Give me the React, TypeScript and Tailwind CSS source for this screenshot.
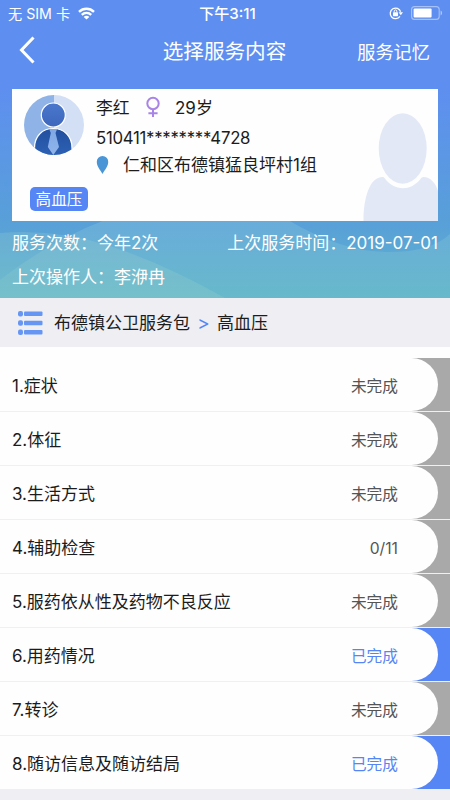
import type { ReactNode } from 'react';

interface ServiceItem {
  name: string;
  status: string;
  done?: boolean;
}

const items: ServiceItem[] = [
  { name: '1.症状', status: '未完成' },
  { name: '2.体征', status: '未完成' },
  { name: '3.生活方式', status: '未完成' },
  { name: '4.辅助检查', status: '0/11' },
  { name: '5.服药依从性及药物不良反应', status: '未完成' },
  { name: '6.用药情况', status: '已完成', done: true },
  { name: '7.转诊', status: '未完成' },
  { name: '8.随访信息及随访结局', status: '已完成', done: true },
];

function StatusBar() {
  return (
    <div className="grid h-[25px] grid-cols-3 items-center pl-2 pr-[7px] text-[14.2px] leading-[25px]">
      <div className="flex items-center gap-2">
        <span className="whitespace-nowrap">无 SIM 卡</span>
        <svg width="17" height="13" viewBox="0 0 17 13" fill="none" stroke="white" strokeWidth="2.4">
          <path d="M1 4.8a10.8 10.8 0 0 1 15 0" />
          <path d="M3.8 7.8a6.8 6.8 0 0 1 9.4 0" />
          <path d="M8.5 12.6 5.7 9.9a3.8 3.8 0 0 1 5.6 0z" fill="white" stroke="none" />
        </svg>
      </div>
      <div className="pl-1 pt-px text-center text-[15px] font-medium">下午3:11</div>
      <div className="flex items-center justify-end gap-[8px]">
        <svg width="14" height="14" viewBox="0 0 14 14" fill="none" stroke="white" strokeWidth="1.3">
          <path d="M10.9 10.4A5.3 5.3 0 1 1 11.6 5.8" />
          <path d="M9.6 6.2H14l-2.2 3z" fill="white" stroke="none" />
          <rect x="4" y="6.2" width="5" height="4" rx="0.6" fill="white" stroke="none" />
          <path d="M5.2 6.4V5.2a1.3 1.3 0 0 1 2.6 0v1.2" strokeWidth="1" />
        </svg>
        <svg width="32" height="14" viewBox="0 0 32 14" fill="none">
          <rect x="0.6" y="0.6" width="27.6" height="12.8" rx="3" stroke="white" strokeOpacity="0.45" strokeWidth="1.1" />
          <rect x="2.6" y="2.5" width="18" height="9" rx="1" fill="white" />
          <path d="M29.6 4.5v5c1.9-.8 1.9-4.2 0-5z" fill="white" fillOpacity="0.5" />
        </svg>
      </div>
    </div>
  );
}

function Avatar() {
  return (
    <svg className="mt-[6px]" width="60" height="60" viewBox="0 0 60 60">
      <defs>
        <clipPath id="avatarClip">
          <circle cx="30" cy="30" r="30" />
        </clipPath>
        <linearGradient id="head" x1="0" y1="0" x2="0" y2="1">
          <stop offset="0" stopColor="#4a78cc" />
          <stop offset="1" stopColor="#3d66bc" />
        </linearGradient>
        <linearGradient id="suit" x1="0" y1="0" x2="0" y2="1">
          <stop offset="0" stopColor="#234f9e" />
          <stop offset="1" stopColor="#2d62b6" />
        </linearGradient>
        <linearGradient id="tie" x1="0" y1="0" x2="0" y2="1">
          <stop offset="0" stopColor="#7fa8e4" />
          <stop offset="1" stopColor="#8fb5ea" />
        </linearGradient>
      </defs>
      <g clipPath="url(#avatarClip)">
        <path d="M0 0h30v60H0z" fill="#8fb3e6" />
        <path d="M30 0h30v60H30z" fill="#d2dff4" />
        <path d="M10.5 62V53c0-12 8-19.5 18.7-19.5S48 41 48 53v9z" fill="url(#suit)" stroke="white" strokeWidth="1.2" />
        <circle cx="29.3" cy="20" r="12" fill="url(#head)" stroke="white" strokeWidth="1.2" />
        <path d="M25.2 34h8l-1.7 4 3.5 14-5.7 8-5.5-8 3-14z" fill="url(#tie)" />
      </g>
    </svg>
  );
}

function PatientCard() {
  return (
    <div className="mx-3 flex h-[132px] bg-[#fefefe] text-[17px] leading-6 text-[#1c1c1c]">
      <div className="flex w-[84px] shrink-0 flex-col pl-3">
        <Avatar />
        <span className="ml-[6px] mt-[32px] flex h-[24px] w-[58px] items-center justify-center rounded-[5px] bg-[#5686f5] pt-px text-[15.6px] text-white">
          高血压
        </span>
      </div>
      <div className="flex flex-1 flex-col whitespace-nowrap pt-[7px]">
        <div className="flex h-6 items-center">
          <span className="w-[34px] text-[16.8px]">李红</span>
          <svg className="-mt-[3px] ml-4 mr-[15px]" width="14" height="22" viewBox="0 0 14 22" fill="none" stroke="#a884e6" strokeWidth="2">
            <circle cx="7" cy="7.5" r="5.7" />
            <path d="M7 13.2V21M2.4 17.3h9.2" />
          </svg>
          <span>29岁</span>
        </div>
        <div className="mt-[6px] h-6 text-[16.8px] tracking-[-0.28px]">510411********4728</div>
        <div className="mt-[3px] flex h-6 items-center">
          <svg width="13" height="18" viewBox="0 0 12 18" fill="#4a95d6">
            <path d="M6 0a5.7 5.7 0 0 1 5.7 6C11.7 10.5 8 14 6 18 4 14 .3 10.5.3 6A5.7 5.7 0 0 1 6 0z" />
          </svg>
          <span className="ml-[14px]">仁和区布德镇猛良坪村1组</span>
        </div>
      </div>
      <svg className="-ml-20 mt-[24px] shrink-0" width="75" height="108" viewBox="0 0 75 108" fill="#e2e8f6">
        <ellipse cx="39.7" cy="35.5" rx="24" ry="35.2" />
        <path d="M0.5 108C0.5 84 7 64 19.5 64c1 0 1.5.4 2 1 10 13.5 26 13.5 36 1 .8-1.3 1.5-2 3-2C68 64 73 71 75 78v30z" />
      </svg>
    </div>
  );
}

function Header({ children }: { children: ReactNode }) {
  return (
    <header className="relative isolate h-[298px] text-white">
      {/* Soft hills behind the card */}
      <svg className="absolute inset-0 -z-10" width="450" height="298" viewBox="0 0 450 298">
        <defs>
          <linearGradient id="sky" x1="0" y1="0" x2="0" y2="1">
            <stop offset="0" stopColor="#5e8ff0" />
            <stop offset="0.3" stopColor="#5e8ff0" />
            <stop offset="0.75" stopColor="#58a0d8" />
            <stop offset="1" stopColor="#5fb4cc" />
          </linearGradient>
          <linearGradient id="hill" x1="0" y1="0" x2="0" y2="1">
            <stop offset="0" stopColor="#69acdb" />
            <stop offset="1" stopColor="#67b9ca" />
          </linearGradient>
        </defs>
        <path d="M0 0h450v298H0z" fill="url(#sky)" />
        <path d="M0 280Q50 241 105 220H288Q340 251 385 252T450 234V298H0z" fill="url(#hill)" />
        <path d="M0 233Q55 228 110 246T225 298H0z" fill="#a9dccb" fillOpacity="0.2" />
      </svg>
      {children}
    </header>
  );
}

export default function App() {
  return (
    <div className="h-[800px] w-[450px] overflow-hidden bg-[#eeeef3] font-['Inter','Noto_Sans_CJK_SC',sans-serif]">
      <Header>
        <StatusBar />
        <nav className="grid h-16 grid-cols-[1fr_auto_1fr] items-center pb-[11px] pl-[19px] pr-5">
          <svg className="-mt-[3px]" width="16" height="28" viewBox="0 0 16 28" fill="none" stroke="white" strokeWidth="3">
            <path d="M14.5 1.5 2.5 14l12 12.5" />
          </svg>
          <h1 className="pt-px text-[20.6px] leading-8">选择服务内容</h1>
          <span className="pt-px text-right text-[18.2px] leading-8">服务记忆</span>
        </nav>
        <PatientCard />
        <div className="px-3 pt-[10px] text-[17px] leading-6">
          <div className="flex justify-between">
            <span>服务次数：今年2次</span>
            <span>上次服务时间：2019-07-01</span>
          </div>
          <div className="mt-[10px]">上次操作人：李洢冉</div>
        </div>
      </Header>

      <div className="flex h-[49px] items-center pl-[18px] text-[17px] text-[#1c1c1c]">
        <svg width="25" height="24" viewBox="0 0 25 24" fill="#6696f3">
          <rect x="0" y="0" width="5" height="5.5" rx="2" />
          <rect x="6" y="0.5" width="18.5" height="4.5" rx="1" />
          <rect x="0" y="9.2" width="5" height="5.5" rx="2" />
          <rect x="6" y="9.7" width="18.5" height="4.5" rx="1" />
          <rect x="0" y="18.4" width="5" height="5.5" rx="2" />
          <rect x="6" y="18.9" width="18.5" height="4.5" rx="1" />
        </svg>
        <span className="ml-[11px] pt-[3px]">布德镇公卫服务包</span>
        <span className="w-[27px] pt-[3px] text-center text-[19px] text-[#5686f5]">&gt;</span>
        <span className="pt-[3px]">高血压</span>
      </div>

      <ul className="bg-[#fefefe] pt-[11px]">
        {items.map((item) => (
          <li key={item.name} className="border-b border-[#f0f0f2] last:border-b-0">
            <div className={`h-[53px] ${item.done ? 'bg-[#5686f5]' : 'bg-[#a9a9a9]'}`}>
              <div className="flex h-full w-[438px] items-center justify-between rounded-r-[27px] bg-[#fefefe] pl-3 pr-10 pt-[5px]">
                <span className="text-[17px] text-[#1c1c1c]">{item.name}</span>
                <span className={`pb-px text-[15.7px] ${item.done ? 'text-[#5686f5]' : 'text-[#555]'}`}>{item.status}</span>
              </div>
            </div>
          </li>
        ))}
      </ul>
    </div>
  );
}
